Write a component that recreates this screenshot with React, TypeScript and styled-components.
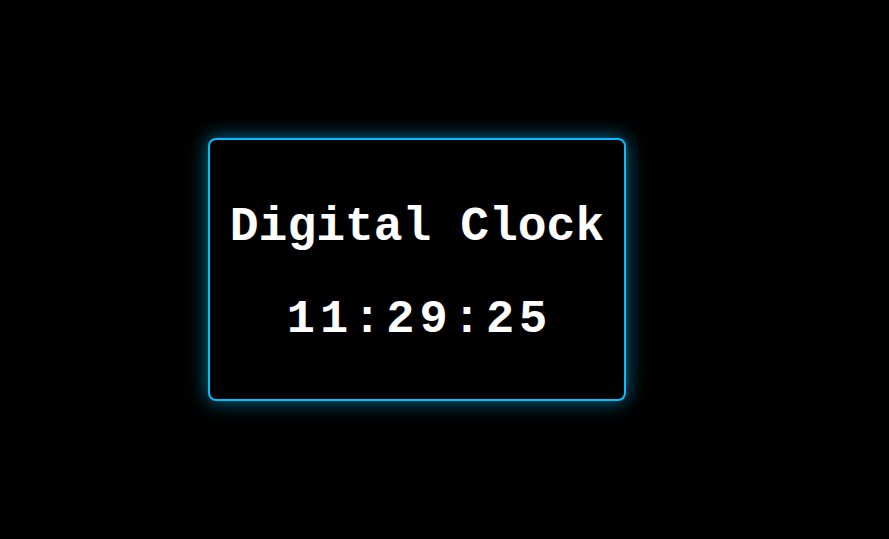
import React, { useState } from 'react';
import styled, { createGlobalStyle } from 'styled-components';

const GlobalStyle = createGlobalStyle`
  html, body {
    margin: 0;
    padding: 0;
    background: #000;
  }
  body {
    font-family: "Liberation Mono", "Courier New", monospace;
  }
`;

const Page = styled.div`
  display: flex;
  align-items: center;
  justify-content: center;
  width: 100vw;
  height: 100vh;
  padding-right: 55px;
  box-sizing: border-box;
  background: #000;
`;

const Card = styled.div`
  display: flex;
  flex-direction: column;
  align-items: center;
  gap: 39px;
  width: 418px;
  height: 263px;
  box-sizing: border-box;
  padding: 60px 20px 0;
  border: 2px solid #00bfff;
  border-radius: 8px;
  box-shadow: 0 0 20px rgba(0, 191, 255, 0.6);
  background: #000;
`;

const Title = styled.h1`
  margin: 0;
  font-family: "Liberation Mono", "Courier New", monospace;
  font-size: 48px;
  font-weight: bold;
  line-height: normal;
  color: #fff;
  white-space: nowrap;
`;

const Time = styled.div`
  margin: 0;
  padding-left: 5px;
  font-family: "Liberation Mono", "Courier New", monospace;
  font-size: 47px;
  font-weight: bold;
  line-height: normal;
  letter-spacing: 5px;
  color: #fff;
`;

const App: React.FC = () => {
  const [time] = useState('11:29:25');

  return (
    <>
      <GlobalStyle />
      <Page>
        <Card>
          <Title>Digital Clock</Title>
          <Time>{time}</Time>
        </Card>
      </Page>
    </>
  );
};

export default App;
